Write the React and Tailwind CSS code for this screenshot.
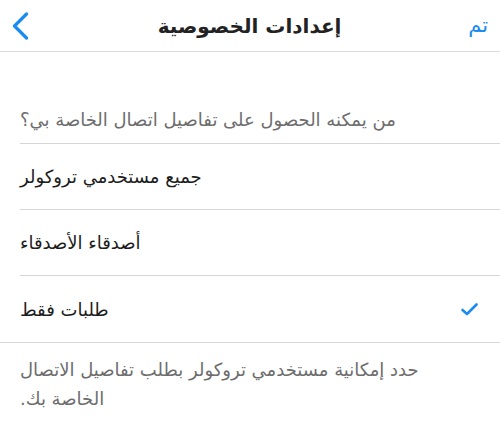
import React from 'react';

const font = { fontFamily: '"DejaVu Sans", sans-serif' };

const options = [
  { label: 'جميع مستخدمي تروكولر', checked: false },
  { label: 'أصدقاء الأصدقاء', checked: false },
  { label: 'طلبات فقط', checked: true },
];

const App = () => {
  return (
    <div className="w-[500px] h-[446px] bg-white overflow-hidden" style={font}>
      {/* header */}
      <div className="h-[52px] flex items-center justify-between pl-[11px] pr-[12px] border-b border-[#dcdcdc]">
        <svg width="18" height="28" viewBox="0 0 18 28" fill="none">
          <path d="M15.5 2 L3.5 14 L15.5 26" stroke="#1a8cf0" strokeWidth="3.2" strokeLinecap="round" strokeLinejoin="round" />
        </svg>
        <div dir="rtl" className="text-[20px] font-bold text-[#222] pl-[2px]">إعدادات الخصوصية</div>
        <div dir="rtl" className="text-[21px] text-[#1a8cf0]">تم</div>
      </div>

      <div className="h-[54px]" />

      {/* section title */}
      <div dir="rtl" className="px-[20px] text-[18px] text-[#6d6d6d] h-[37px] flex items-start justify-end">
        <span>من يمكنه الحصول على تفاصيل اتصال الخاصة بي؟</span>
      </div>

      <div className="ml-[20px] border-t border-[#d6d6d6]">
        {options.map((o, i) => (
          <div
            key={i}
            className={`h-[66px] flex items-center justify-between pr-[22px] ${i < options.length - 1 ? 'border-b border-[#d6d6d6]' : ''}`}
          >
            <span dir="rtl" className="text-[18px] text-[#1c1c1c]">{o.label}</span>
            {o.checked && (
              <svg width="17" height="13" viewBox="0 0 17 13" fill="none">
                <path d="M1.5 7 L6 11 L15.5 1.5" stroke="#1a8cf0" strokeWidth="2.6" strokeLinecap="round" strokeLinejoin="round" />
              </svg>
            )}
          </div>
        ))}
      </div>

      <div className="border-t border-[#d6d6d6] px-[20px] pt-[12px]">
        <p dir="rtl" className="text-left w-[440px] text-[18px] leading-[29px] text-[#6d6d6d]">
          حدد إمكانية مستخدمي تروكولر بطلب تفاصيل الاتصال الخاصة بك.
        </p>
      </div>
    </div>
  );
};

export default App;
